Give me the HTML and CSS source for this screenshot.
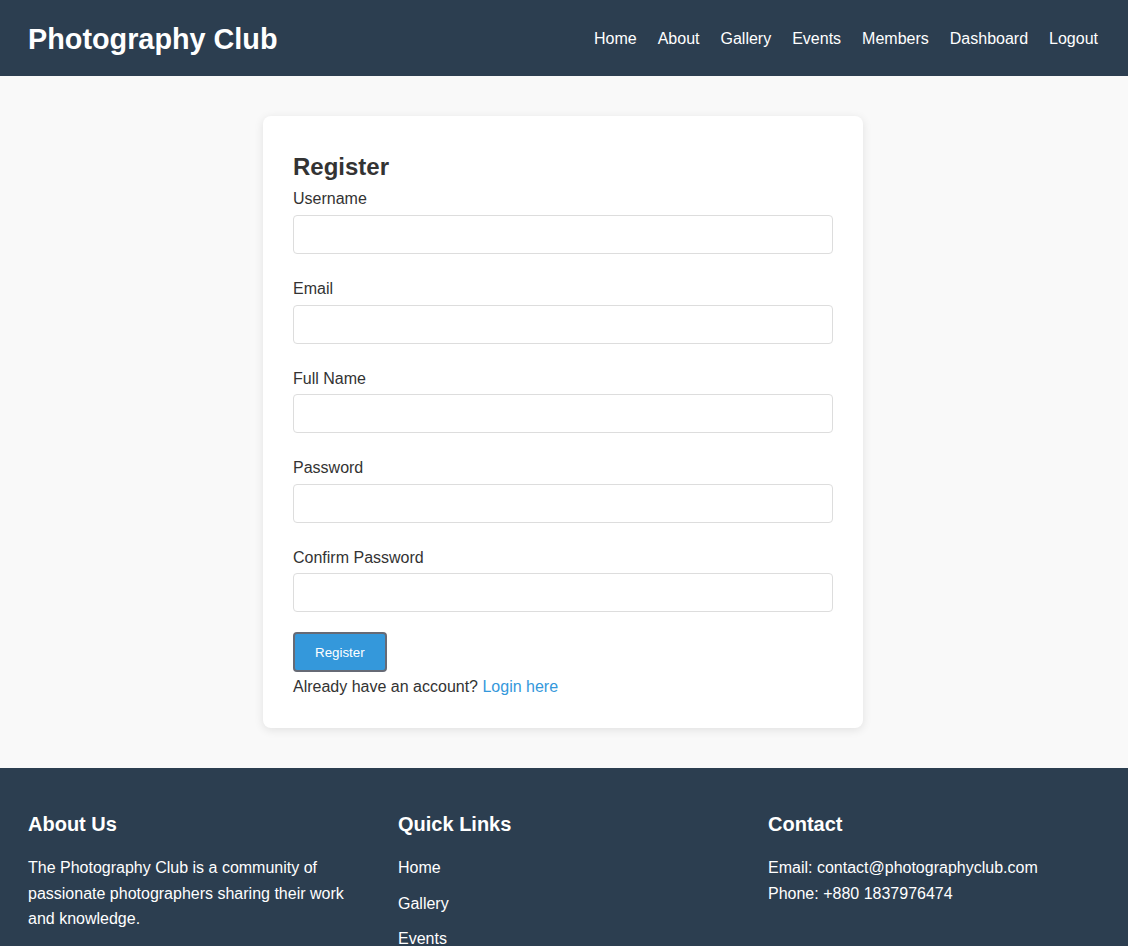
FILE: index.html
```html
<!DOCTYPE html>
<html lang="en">
<head>
<meta charset="utf-8">
<title>Register - Photography Club</title>
<link rel="stylesheet" href="styles.css">
</head>
<body>
<header class="site-header">
  <div class="logo">Photography Club</div>
  <nav class="nav">
    <a href="#">Home</a>
    <a href="#">About</a>
    <a href="#">Gallery</a>
    <a href="#">Events</a>
    <a href="#">Members</a>
    <a href="#">Dashboard</a>
    <a href="#">Logout</a>
  </nav>
</header>

<main class="main">
  <div class="card">
    <h2 class="card-title">Register</h2>
    <form class="form">
      <div class="form-group">
        <label for="username">Username</label>
        <input id="username" type="text">
      </div>
      <div class="form-group">
        <label for="email">Email</label>
        <input id="email" type="email">
      </div>
      <div class="form-group">
        <label for="fullname">Full Name</label>
        <input id="fullname" type="text">
      </div>
      <div class="form-group">
        <label for="password">Password</label>
        <input id="password" type="password">
      </div>
      <div class="form-group">
        <label for="confirm">Confirm Password</label>
        <input id="confirm" type="password">
      </div>
      <button type="button" class="btn">Register</button>
    </form>
    <p class="alt">Already have an account? <a href="#">Login here</a></p>
  </div>
</main>

<footer class="site-footer">
  <div class="footer-grid">
    <div class="footer-col">
      <h3>About Us</h3>
      <p>The Photography Club is a community of passionate photographers sharing their work and knowledge.</p>
    </div>
    <div class="footer-col">
      <h3>Quick Links</h3>
      <ul class="links">
        <li><a href="#">Home</a></li>
        <li><a href="#">Gallery</a></li>
        <li><a href="#">Events</a></li>
      </ul>
    </div>
    <div class="footer-col">
      <h3>Contact</h3>
      <p>Email: contact@photographyclub.com</p>
      <p>Phone: +880 1837976474</p>
    </div>
  </div>
</footer>
</body>
</html>
```

FILE: styles.css
```css
* { box-sizing: border-box; }

body {
  margin: 0;
  font-family: "Segoe UI", "Liberation Sans", Arial, sans-serif;
  font-size: 16px;
  line-height: 1.6;
  color: #333;
  background: #f9f9f9;
}

a { text-decoration: none; }

.site-header {
  height: 76px;
  background: #2c3e50;
  color: #fff;
  display: flex;
  align-items: center;
  justify-content: space-between;
  padding: 2px 30px 0 28px;
}

.logo {
  font-size: 28.8px;
  font-weight: 700;
}

.nav {
  display: flex;
  gap: 21px;
}

.nav a { color: #fff; }

.main {
  padding: 40px 2px 40px 0;
  display: flex;
  justify-content: center;
}

.card {
  width: 600px;
  background: #fff;
  border-radius: 8px;
  box-shadow: 0 2px 10px rgba(0, 0, 0, 0.1);
  padding: 32px 30px 28px;
}

.card-title {
  margin: 0;
  font-size: 24px;
  line-height: 1.6;
}

.form-group { margin-bottom: 22px; }
.form-group:last-of-type { margin-bottom: 20px; }

.form-group label {
  display: block;
  margin-bottom: 3px;
}

.form-group input {
  display: block;
  width: 100%;
  height: 39px;
  padding: 8px 10px;
  border: 1px solid #ddd;
  border-radius: 4px;
  font: inherit;
}

.btn {
  height: 40px;
  padding: 0 20px;
  background: #3498db;
  color: #fff;
  border: 2px solid #666a75;
  border-radius: 4px;
  font-family: inherit;
  font-size: 13.33px;
  display: block;
}

.alt { margin: 2px 0 0; }
.alt a { color: #3498db; }

.site-footer {
  background: #2c3e50;
  color: #fff;
  padding: 40px 28px;
}

.footer-grid {
  display: grid;
  grid-template-columns: repeat(3, 332px);
  column-gap: 38px;
}

.footer-col h3 {
  margin: 0 0 15px;
  font-size: 20px;
}

.footer-col p { margin: 0; }

.links {
  list-style: none;
  margin: 0;
  padding: 0;
}

.links li { margin-bottom: 10px; }
.links a { color: #fff; }
```
